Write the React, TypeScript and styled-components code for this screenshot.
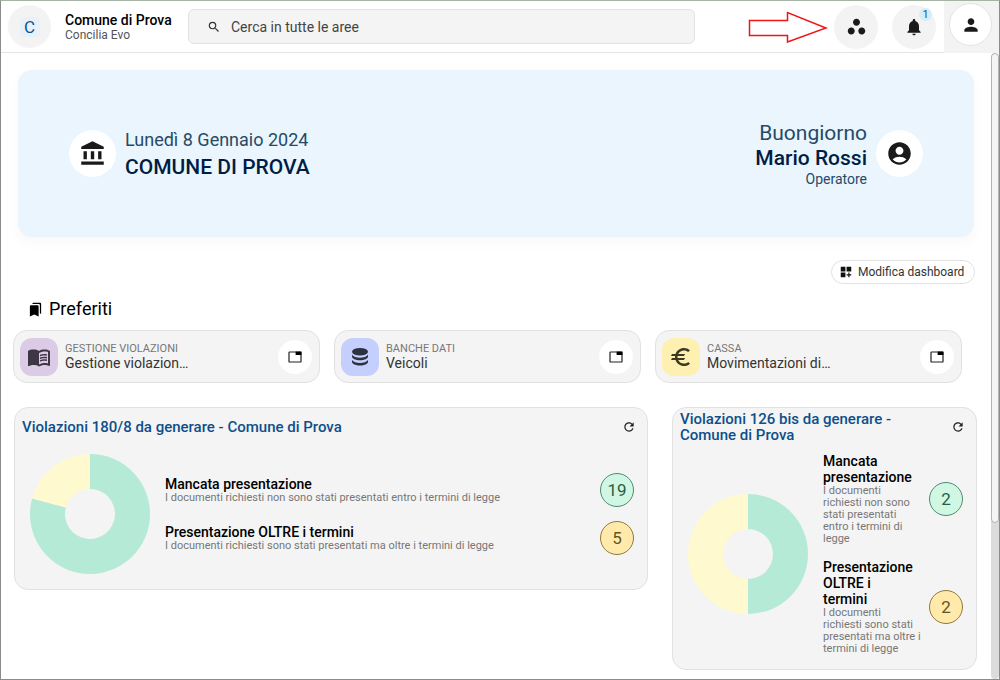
import React from "react";
import styled, { createGlobalStyle } from "styled-components";
import {
  MdAccountBalance,
  MdAccountCircle,
  MdBookmarks,
  MdDashboardCustomize,
  MdEuro,
  MdMenuBook,
  MdNotifications,
  MdPerson,
  MdRefresh,
  MdSearch,
  MdWorkspaces,
} from "react-icons/md";

const GlobalStyle = createGlobalStyle`
  *, *::before, *::after { box-sizing: border-box; }
  body {
    margin: 0;
    background: #fff;
    color: #1b1b1b;
    font-family: Roboto, "Liberation Sans", sans-serif;
  }
  button, input { font: inherit; color: inherit; }
  h1, h2, h3, p, ul { margin: 0; padding: 0; font-weight: inherit; }
`;

const Shell = styled.div`
  min-height: 100vh;
  display: flex;
  flex-direction: column;
  border: 1px solid #8c8c8c;
  border-top-color: #a5b5a5;
`;

const TopBar = styled.header`
  display: flex;
  align-items: stretch;
  height: 52px;
  border-bottom: 1px solid #e4e4e4;
`;

const TopBarMain = styled.div`
  flex: 1;
  min-width: 0;
  display: flex;
  align-items: center;
  padding: 0 8px 0 7px;
`;

const Logo = styled.div`
  flex: none;
  display: grid;
  place-items: center;
  width: 43px;
  height: 43px;
  border-radius: 50%;
  background: #f3f3f3;
`;

const LogoLetter = styled.span`
  display: grid;
  place-items: center;
  width: 20px;
  height: 20px;
  border-radius: 4px;
  background: #e9f1f8;
  color: #0d5493;
  font-size: 17px;
  line-height: 20px;
`;

const Brand = styled.div`
  flex: none;
  width: 123px;
  margin-left: 14px;
`;

const BrandName = styled.h1`
  font-size: 14px;
  line-height: 16px;
  font-weight: 500;
  color: #000;
  white-space: nowrap;
`;

const BrandSub = styled.p`
  font-size: 12px;
  line-height: 14px;
  color: #555;
`;

const SearchBox = styled.label`
  flex: 0 1 507px;
  min-width: 0;
  display: flex;
  align-items: center;
  gap: 10px;
  height: 35px;
  padding: 0 18px;
  border: 1px solid #e2e2e2;
  border-radius: 6px;
  background: #f4f4f4;
  color: #333;
  svg { flex: none; }
`;

const SearchInput = styled.input`
  flex: 1;
  min-width: 0;
  padding: 0;
  border: 0;
  outline: 0;
  background: transparent;
  font-size: 14px;
  &::placeholder { color: #444; opacity: 1; }
`;

const Actions = styled.div`
  display: flex;
  align-items: center;
  gap: 14px;
  margin-left: auto;
`;

const Pointer = styled.svg`
  flex: none;
  margin-right: -8px;
`;

const RoundButton = styled.button<{ $size: number; $bg: string; $line?: boolean }>`
  position: relative;
  flex: none;
  display: grid;
  place-items: center;
  width: ${(p) => p.$size}px;
  height: ${(p) => p.$size}px;
  padding: 0;
  border: ${(p) => (p.$line ? "1px solid #e4e4e4" : "0")};
  border-radius: 50%;
  background: ${(p) => p.$bg};
  color: #1a1a1a;
  cursor: pointer;
`;

const Counter = styled.span`
  position: absolute;
  top: 3px;
  right: 4px;
  width: 13px;
  height: 13px;
  border-radius: 50%;
  background: #d3edfb;
  color: #24597b;
  font-size: 11px;
  line-height: 13px;
  text-align: center;
`;

const ProfileCell = styled.div`
  flex: none;
  width: 55px;
  height: 52px;
  padding: 2px 0 0 5px;
  background: #f3f3f3;
`;

const Viewport = styled.div`
  flex: 1;
  display: flex;
`;

const Content = styled.main`
  flex: 1;
  min-width: 0;
  padding: 17px 13px 9px;
`;

const ScrollTrack = styled.div`
  flex: none;
  width: 8px;
  border-radius: 4px;
  background: #dcdcdc;
`;

const ScrollThumb = styled.div`
  height: 75%;
  border: 1px solid #b4b4b4;
  border-radius: 4px;
  background: #f5f5f5;
`;

const Banner = styled.section`
  display: flex;
  align-items: center;
  justify-content: space-between;
  min-height: 167px;
  margin: 0 4px;
  padding: 0 51px;
  border-radius: 14px;
  background: #eaf5fe;
  box-shadow: 0 6px 14px rgba(0, 0, 0, 0.03);
`;

const BannerSide = styled.div<{ $end?: boolean }>`
  display: flex;
  align-items: center;
  gap: 9px;
  text-align: ${(p) => (p.$end ? "right" : "left")};
`;

const BannerIcon = styled.div`
  flex: none;
  display: grid;
  place-items: center;
  width: 47px;
  height: 47px;
  border-radius: 50%;
  background: #fff;
  color: #1a1a1a;
`;

const BannerText = styled.p<{ $size: number; $line: number; $strong?: boolean }>`
  font-size: ${(p) => p.$size}px;
  line-height: ${(p) => p.$line}px;
  font-weight: ${(p) => (p.$strong ? 500 : 400)};
  color: ${(p) => (p.$strong ? "#001d45" : "#264a66")};
`;

const Toolbar = styled.div`
  display: flex;
  justify-content: flex-end;
  margin: 23px 3px 0 0;
`;

const EditButton = styled.button`
  display: flex;
  align-items: center;
  gap: 5px;
  width: 144px;
  height: 24px;
  padding: 0 7px;
  border: 1px solid #e2e2e2;
  border-radius: 12px;
  background: #fff;
  color: #333;
  font-size: 12px;
  white-space: nowrap;
  cursor: pointer;
  svg { color: #111; }
`;

const SectionTitle = styled.h2`
  display: flex;
  align-items: center;
  gap: 6px;
  margin: 13px 0 9px 14px;
  color: #000;
  font-size: 18px;
  line-height: 24px;
`;

const Favourites = styled.div`
  display: grid;
  grid-template-columns: repeat(3, minmax(0, 1fr));
  gap: 14px;
  margin: 0 16px 0 -1px;
`;

const FavouriteCard = styled.article`
  display: flex;
  align-items: center;
  gap: 7px;
  height: 53px;
  padding: 0 7px 0 6px;
  border: 1px solid #e1e1e1;
  border-radius: 14px;
  background: #f4f4f4;
`;

const Tile = styled.div<{ $bg: string; $fg: string }>`
  flex: none;
  display: grid;
  place-items: center;
  width: 38px;
  height: 38px;
  border-radius: 12px;
  background: ${(p) => p.$bg};
  color: ${(p) => p.$fg};
`;

const FavouriteText = styled.div`
  flex: 1;
  min-width: 0;
`;

const FavouriteArea = styled.p`
  color: #777;
  font-size: 11px;
  line-height: 12px;
`;

const FavouriteName = styled.h3`
  color: #333;
  font-size: 14px;
  line-height: 16px;
`;

const Widgets = styled.div`
  display: grid;
  grid-template-columns: minmax(0, 634fr) minmax(0, 305fr);
  align-items: start;
  gap: 24px;
  margin: 24px 1px 0 0;
`;

const Widget = styled.article`
  padding: 0 13px 14px 7px;
  border: 1px solid #e1e1e1;
  border-radius: 14px;
  background: #f4f4f4;
`;

const WidgetHead = styled.div`
  display: flex;
  align-items: center;
  justify-content: space-between;
  gap: 12px;
  height: 38px;
`;

const WidgetTitle = styled.h2`
  color: #0d4f8b;
  font-size: 15px;
  line-height: 16px;
  font-weight: 500;
`;

const PlainButton = styled.button`
  flex: none;
  display: grid;
  place-items: center;
  width: 12px;
  height: 14px;
  padding: 0;
  border: 0;
  background: transparent;
  color: #222;
  cursor: pointer;
`;

const WidgetBody = styled.div`
  display: flex;
  align-items: center;
  gap: 15px;
  min-height: 129px;
  padding: 7px 0 0 8px;
`;

const Chart = styled.svg`
  flex: none;
`;

const Stats = styled.ul`
  flex: 1;
  min-width: 0;
  display: grid;
  gap: 14px;
  list-style: none;
`;

const Stat = styled.li`
  display: flex;
  align-items: center;
  justify-content: space-between;
  gap: 7px;
  min-height: 34px;
`;

const StatTitle = styled.h3`
  padding-right: 6px;
  color: #000;
  font-size: 14px;
  line-height: 16px;
  font-weight: 500;
`;

const StatNote = styled.p`
  color: #777;
  font-size: 11px;
  line-height: 12px;
`;

const Badge = styled.span<{ $tone: "green" | "yellow" }>`
  flex: none;
  width: 34px;
  height: 34px;
  border: 1px solid ${(p) => (p.$tone === "green" ? "#4f8a70" : "#8f7a3a")};
  border-radius: 50%;
  background: ${(p) => (p.$tone === "green" ? "#cff7e3" : "#ffeaab")};
  color: ${(p) => (p.$tone === "green" ? "#2b5c45" : "#66541a")};
  font-size: 17px;
  line-height: 32px;
  text-align: center;
`;

const WindowIcon = () => (
  <svg width="14" height="12" viewBox="0 0 14 12" aria-hidden="true">
    <rect x="1" y="1" width="12" height="10" rx="0.6" fill="none" stroke="#222" strokeWidth="1.2" />
    <path d="M7.6 0.6H13.4V4H7.6Z" fill="#000" />
  </svg>
);

const DatabaseIcon = () => (
  <svg width="18" height="20" viewBox="0 0 18 20" fill="currentColor" aria-hidden="true">
    <ellipse cx="9" cy="4.8" rx="8" ry="3.8" />
    <path d="M1 7.8C2.4 9.9 5.4 10.8 9 10.8S15.6 9.9 17 7.8V9.6C17 11.7 13.6 13.3 9 13.3S1 11.7 1 9.6Z" />
    <path d="M1 12.9C2.4 15 5.4 15.9 9 15.9S15.6 15 17 12.9V14.7C17 16.8 13.6 18.4 9 18.4S1 16.8 1 14.7Z" />
  </svg>
);

const ringSlice = (from: number, to: number) => {
  const at = (share: number, r: number) => {
    const a = share * 2 * Math.PI - Math.PI / 2;
    return `${60 + r * Math.cos(a)} ${60 + r * Math.sin(a)}`;
  };
  const large = to - from > 0.5 ? 1 : 0;
  return `M${at(from, 60)}A60 60 0 ${large} 1 ${at(to, 60)}L${at(to, 25)}A25 25 0 ${large} 0 ${at(from, 25)}Z`;
};

const Donut = ({ missing, late }: { missing: number; late: number }) => {
  const split = missing / (missing + late);
  return (
    <Chart width="120" height="120" viewBox="0 0 120 120" aria-hidden="true">
      <path d={ringSlice(0, split)} fill="#b5ead7" />
      <path d={ringSlice(split, 1)} fill="#fff9cf" />
    </Chart>
  );
};

const favourites = [
  { area: "GESTIONE VIOLAZIONI", name: "Gestione violazion…", bg: "#dccbe6", fg: "#3e3545", icon: <MdMenuBook size={24} /> },
  { area: "BANCHE DATI", name: "Veicoli", bg: "#c5cffd", fg: "#2c3040", icon: <DatabaseIcon /> },
  { area: "CASSA", name: "Movimentazioni di…", bg: "#fdf0b0", fg: "#3d3a24", icon: <MdEuro size={24} /> },
];

const widgets = [
  { title: "Violazioni 180/8 da generare - Comune di Prova", missing: 19, late: 5 },
  { title: "Violazioni 126 bis da generare - Comune di Prova", missing: 2, late: 2 },
];

export default function App() {
  return (
    <Shell>
      <GlobalStyle />
      <TopBar>
        <TopBarMain>
          <Logo>
            <LogoLetter>C</LogoLetter>
          </Logo>
          <Brand>
            <BrandName>Comune di Prova</BrandName>
            <BrandSub>Concilia Evo</BrandSub>
          </Brand>
          <SearchBox>
            <MdSearch size={14} />
            <SearchInput type="text" aria-label="Cerca" placeholder="Cerca in tutte le aree" />
          </SearchBox>
          <Actions>
            <Pointer width="80" height="32" viewBox="0 0 80 32" aria-hidden="true">
              <path d="M1.5 9.5H39.5V1.5L78 17L39.5 31V24.5H1.5Z" fill="#fff" stroke="#f01414" strokeWidth="1.5" />
            </Pointer>
            <RoundButton $size={44} $bg="#f3f3f3" aria-label="Aree">
              <MdWorkspaces size={21} />
            </RoundButton>
            <RoundButton $size={44} $bg="#f3f3f3" aria-label="Notifiche">
              <MdNotifications size={20} />
              <Counter>1</Counter>
            </RoundButton>
          </Actions>
        </TopBarMain>
        <ProfileCell>
          <RoundButton $size={43} $bg="#fff" $line aria-label="Profilo">
            <MdPerson size={20} />
          </RoundButton>
        </ProfileCell>
      </TopBar>
      <Viewport>
        <Content>
          <Banner>
            <BannerSide>
              <BannerIcon>
                <MdAccountBalance size={27} />
              </BannerIcon>
              <div>
                <BannerText $size={18} $line={26}>Lunedì 8 Gennaio 2024</BannerText>
                <BannerText $size={21} $line={28} $strong>COMUNE DI PROVA</BannerText>
              </div>
            </BannerSide>
            <BannerSide $end>
              <div>
                <BannerText $size={21} $line={25}>Buongiorno</BannerText>
                <BannerText $size={21} $line={25} $strong>Mario Rossi</BannerText>
                <BannerText $size={14} $line={16}>Operatore</BannerText>
              </div>
              <BannerIcon>
                <MdAccountCircle size={27} />
              </BannerIcon>
            </BannerSide>
          </Banner>
          <Toolbar>
            <EditButton>
              <MdDashboardCustomize size={14} />
              Modifica dashboard
            </EditButton>
          </Toolbar>
          <SectionTitle>
            <MdBookmarks size={15} />
            Preferiti
          </SectionTitle>
          <Favourites>
            {favourites.map((f) => (
              <FavouriteCard key={f.area}>
                <Tile $bg={f.bg} $fg={f.fg}>{f.icon}</Tile>
                <FavouriteText>
                  <FavouriteArea>{f.area}</FavouriteArea>
                  <FavouriteName>{f.name}</FavouriteName>
                </FavouriteText>
                <RoundButton $size={34} $bg="#fff" aria-label="Apri in una nuova scheda">
                  <WindowIcon />
                </RoundButton>
              </FavouriteCard>
            ))}
          </Favourites>
          <Widgets>
            {widgets.map((w) => (
              <Widget key={w.title}>
                <WidgetHead>
                  <WidgetTitle>{w.title}</WidgetTitle>
                  <PlainButton aria-label="Aggiorna">
                    <MdRefresh size={14} />
                  </PlainButton>
                </WidgetHead>
                <WidgetBody>
                  <Donut missing={w.missing} late={w.late} />
                  <Stats>
                    <Stat>
                      <div>
                        <StatTitle>Mancata presentazione</StatTitle>
                        <StatNote>I documenti richiesti non sono stati presentati entro i termini di legge</StatNote>
                      </div>
                      <Badge $tone="green">{w.missing}</Badge>
                    </Stat>
                    <Stat>
                      <div>
                        <StatTitle>Presentazione OLTRE i termini</StatTitle>
                        <StatNote>I documenti richiesti sono stati presentati ma oltre i termini di legge</StatNote>
                      </div>
                      <Badge $tone="yellow">{w.late}</Badge>
                    </Stat>
                  </Stats>
                </WidgetBody>
              </Widget>
            ))}
          </Widgets>
        </Content>
        <ScrollTrack>
          <ScrollThumb />
        </ScrollTrack>
      </Viewport>
    </Shell>
  );
}
